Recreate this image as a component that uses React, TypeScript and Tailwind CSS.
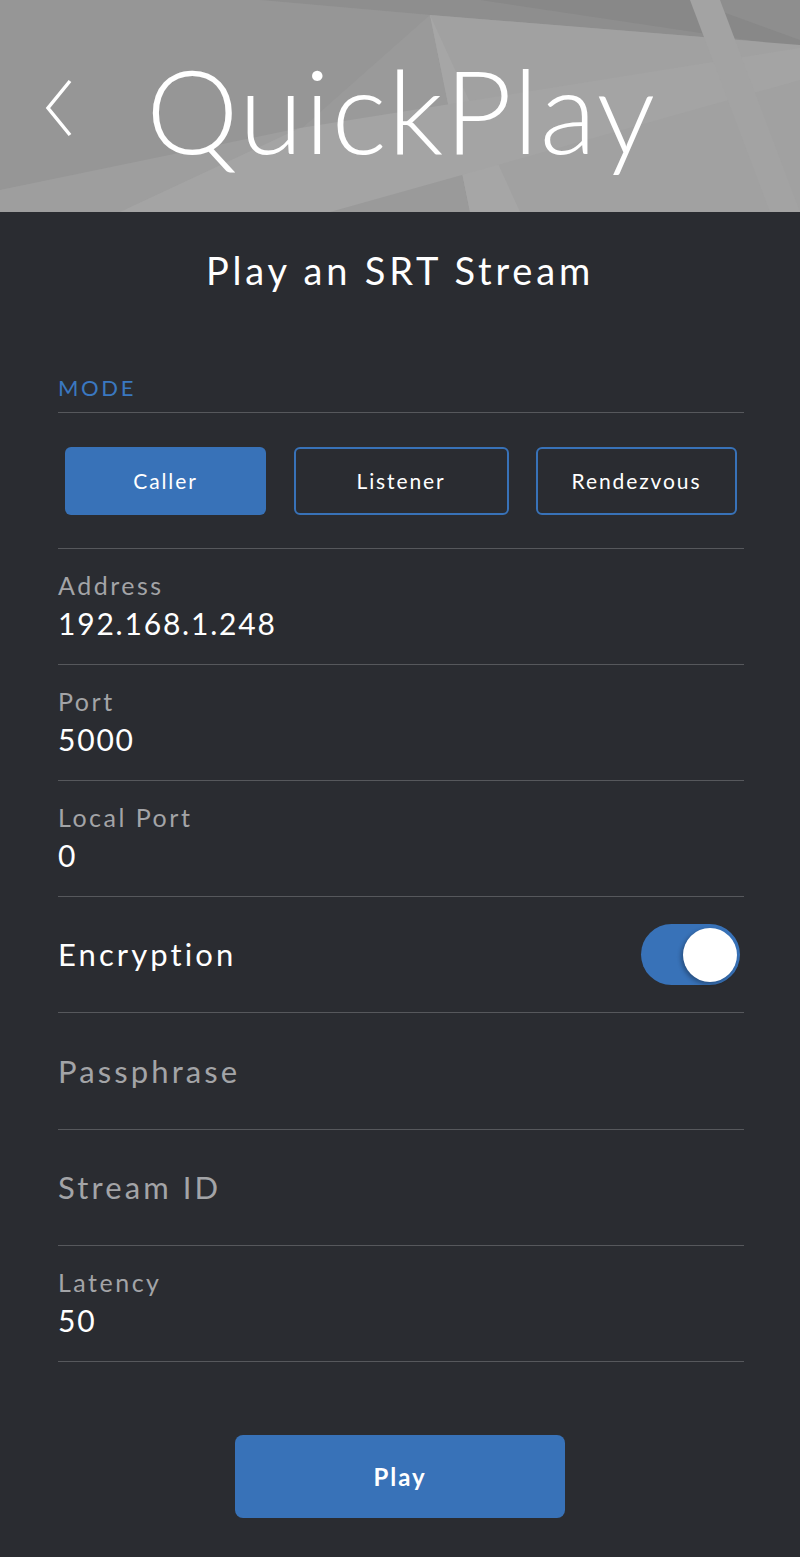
const font = { fontFamily: "Lato, 'Noto Sans', sans-serif" }

function HeaderArt() {
  return (
    <svg className="absolute inset-0 h-full w-full" viewBox="0 0 800 212" preserveAspectRatio="none">
      <rect width="800" height="212" fill="#9a9a9a" />
      <polygon points="0,0 260,0 430,15 300,130 0,190" fill="#969696" />
      <polygon points="260,0 800,0 800,45 430,15" fill="#8e8e8e" />
      <polygon points="480,0 690,0 800,40 800,48" fill="#888888" />
      <polygon points="430,15 800,45 800,212 470,212" fill="#a1a1a1" />
      <polygon points="430,15 470,212 520,212" fill="#a6a6a6" />
      <polygon points="0,212 300,128 800,48 800,80 330,212" fill="#a4a4a4" />
      <polygon points="0,190 300,128 120,212 0,212" fill="#9e9e9e" />
      <polygon points="690,0 720,0 800,212 770,212" fill="#a3a3a3" />
    </svg>
  )
}

function Field({ label, value }: { label: string; value: string }) {
  return (
    <div className="flex h-[116px] flex-col justify-center border-b border-[#56585c] pb-[2px]">
      <div className="text-[25px] leading-[30px] tracking-[0.1em] text-[#a3a4a7]">{label}</div>
      <div className="mt-[4px] text-[30px] leading-[38px] tracking-[0.06em] text-white">{value}</div>
    </div>
  )
}

function Placeholder({ label, tall }: { label: string; tall?: boolean }) {
  return (
    <div className={`flex items-center border-b border-[#56585c] ${tall ? "h-[117px]" : "h-[116px]"}`}>
      <div className="text-[31px] tracking-[0.1em] text-[#a3a4a7]">{label}</div>
    </div>
  )
}

export default function App() {
  return (
    <div className="min-h-[1557px] w-[800px] bg-[#2a2c31]" style={font}>
      <div className="relative h-[212px] overflow-hidden">
        <HeaderArt />
        <div className="relative flex h-full items-center pl-[44px]">
          <svg width="30" height="58" viewBox="0 0 30 58" className="mt-[4px]">
            <polyline points="26,2 4,29 26,56" fill="none" stroke="white" strokeWidth="3.5" />
          </svg>
          <h1 className="ml-[72px] mt-[6px] text-[117px] font-light leading-none tracking-[0.01em] text-white">
            QuickPlay
          </h1>
        </div>
      </div>

      <h2 className="pt-[33px] text-center text-[38px] leading-[50px] tracking-[0.1em] text-white">
        Play an SRT Stream
      </h2>

      <div className="pl-[58px] pr-[56px] pt-[79px]">
        <div className="border-b border-[#56585c] pb-[10px] text-[22px] leading-[28px] tracking-[0.12em] text-[#3a78c0]">
          MODE
        </div>
        <div className="flex h-[136px] items-center justify-between border-b border-[#56585c] px-[7px] pt-[1px]">
          <button className="h-[68px] w-[201px] rounded-[6px] bg-[#3872b8] text-[21px] tracking-[0.09em] text-white">
            Caller
          </button>
          <button className="h-[68px] w-[215px] rounded-[6px] border-2 border-[#3872b8] text-[21px] tracking-[0.09em] text-white">
            Listener
          </button>
          <button className="h-[68px] w-[201px] rounded-[6px] border-2 border-[#3872b8] text-[21px] tracking-[0.09em] text-white">
            Rendezvous
          </button>
        </div>

        <Field label="Address" value="192.168.1.248" />
        <Field label="Port" value="5000" />
        <Field label="Local Port" value="0" />

        <div className="flex h-[116px] items-center justify-between border-b border-[#56585c]">
          <div className="text-[31px] tracking-[0.1em] text-white">Encryption</div>
          <div className="mr-[4px] flex h-[61px] w-[99px] items-center justify-end rounded-full bg-[#3872b8] pr-[3px]">
            <div className="h-[54px] w-[54px] rounded-full bg-white shadow-[-2px_2px_4px_rgba(0,0,0,0.3)]" />
          </div>
        </div>

        <Placeholder label="Passphrase" tall />
        <Placeholder label="Stream ID" />
        <Field label="Latency" value="50" />
      </div>

      <div className="flex justify-center pt-[73px]">
        <button className="h-[83px] w-[330px] rounded-[8px] bg-[#3872b8] text-[24px] font-bold tracking-[0.08em] text-white">
          Play
        </button>
      </div>
    </div>
  )
}
